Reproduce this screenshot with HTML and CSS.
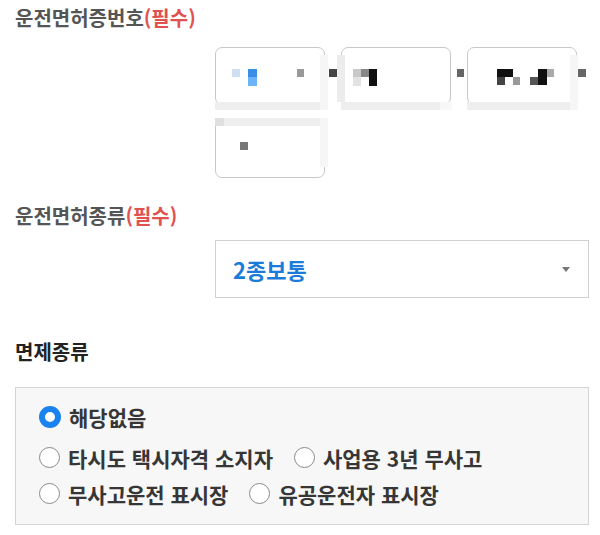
FILE: index.html
```html
<!DOCTYPE html>
<html lang="ko">
<head>
    <meta charset="UTF-8">
    <meta name="viewport" content="width=device-width, initial-scale=1.0">
    <title>운전면허 정보</title>
    <link rel="stylesheet" href="styles.css">
</head>
<body>

    <div class="form">
        <div class="label">운전면허증번호<span class="req">(필수)</span></div>

        <div class="license-no">
            <input type="text" class="box">
            <input type="text" class="box">
            <input type="text" class="box">
            <input type="text" class="box">

            <!-- 가려진 번호 (모자이크) -->
            <svg class="mosaic" width="375" height="131" viewBox="0 0 375 131">
                <rect x="0" y="55" width="105" height="8" fill="#eeeeee"/>
                <rect x="105" y="8" width="8" height="55" fill="#f6f6f6"/>
                <rect x="122" y="8" width="8" height="47" fill="#ececec"/>
                <rect x="126" y="55" width="99" height="8" fill="#eeeeee"/>
                <rect x="225" y="55" width="12" height="8" fill="#f8f8f8"/>
                <rect x="252" y="55" width="103" height="8" fill="#eeeeee"/>
                <rect x="355" y="8" width="8" height="55" fill="#f6f6f6"/>
                <rect x="0" y="71" width="9" height="8" fill="#e0e0e0"/>
                <rect x="9" y="71" width="96" height="8" fill="#eeeeee"/>
                <rect x="105" y="71" width="8" height="49" fill="#f6f6f6"/>

                <rect x="17" y="22" width="8" height="8" fill="#cfe0f2"/>
                <rect x="33" y="22" width="9" height="8" fill="#3b8ee6"/>
                <rect x="33" y="30" width="9" height="9" fill="#6db3f7"/>
                <rect x="82" y="22" width="7" height="8" fill="#999999"/>
                <rect x="114" y="22" width="8" height="8" fill="#444444"/>
                <rect x="138" y="22" width="8" height="8" fill="#c8c8c8"/>
                <rect x="138" y="30" width="8" height="9" fill="#e2e2e2"/>
                <rect x="146" y="22" width="8" height="8" fill="#888888"/>
                <rect x="154" y="22" width="8" height="17" fill="#111111"/>
                <rect x="242" y="22" width="7" height="8" fill="#666666"/>
                <rect x="282" y="22" width="16" height="8" fill="#111111"/>
                <rect x="282" y="30" width="8" height="8" fill="#444444"/>
                <rect x="298" y="30" width="7" height="8" fill="#999999"/>
                <rect x="315" y="30" width="8" height="8" fill="#555555"/>
                <rect x="323" y="22" width="9" height="16" fill="#111111"/>
                <rect x="332" y="22" width="7" height="8" fill="#aaaaaa"/>
                <rect x="363" y="22" width="8" height="8" fill="#666666"/>
                <rect x="25" y="95" width="8" height="8" fill="#777777"/>
            </svg>
        </div>

        <div class="label label-second">운전면허종류<span class="req">(필수)</span></div>

        <div class="select-wrap">
            <select class="select">
                <option>2종보통</option>
                <option>1종보통</option>
                <option>1종대형</option>
            </select>
        </div>

        <div class="label label-dark">면제종류</div>

        <div class="options">
            <div class="row">
                <label class="opt"><input type="radio" name="exempt" checked> 해당없음</label>
            </div>
            <div class="row">
                <label class="opt"><input type="radio" name="exempt"> 타시도 택시자격 소지자</label>
                <label class="opt"><input type="radio" name="exempt"> 사업용 3년 무사고</label>
            </div>
            <div class="row">
                <label class="opt"><input type="radio" name="exempt"> 무사고운전 표시장</label>
                <label class="opt"><input type="radio" name="exempt"> 유공운전자 표시장</label>
            </div>
        </div>
    </div>

</body>
</html>
```

FILE: styles.css
```css
body {
    margin: 0;
    background-color: #fff;
    font-family: "Noto Sans CJK KR", "Noto Sans", sans-serif;
}

.form {
    padding: 5px 11px 0 15px;
}

.label {
    font-size: 20px;
    line-height: 26px;
    font-weight: 700;
    color: #555;
}

.label .req {
    color: #e05252;
}

.label-second {
    margin-top: 25px;
}

.label-dark {
    margin-top: 41px;
    color: #222;
}

.license-no {
    position: relative;
    margin: 16px 0 0 200px;
    display: grid;
    grid-template-columns: repeat(3, 110px);
    gap: 15px 16px;
}

.box {
    box-sizing: border-box;
    height: 58px;
    border: 1px solid #c8c8c8;
    border-radius: 7px;
    background: #fff;
    outline: none;
}

.mosaic {
    position: absolute;
    left: 0;
    top: 0;
    overflow: visible;
}

.select-wrap {
    position: relative;
    margin: 11px 0 0 200px;
}

.select {
    box-sizing: border-box;
    width: 374px;
    height: 58px;
    padding: 0 0 0 17px;
    border: 1.5px solid #d0d0d0;
    border-radius: 0;
    background: #fff;
    -webkit-appearance: none;
    appearance: none;
    font-family: inherit;
    font-size: 22px;
    font-weight: 700;
    color: #1a7bd9;
    outline: none;
}

.select-wrap::after {
    content: "";
    position: absolute;
    left: 347px;
    top: 27px;
    border-left: 4.5px solid transparent;
    border-right: 4.5px solid transparent;
    border-top: 5px solid #777;
}

.options {
    margin-top: 22px;
    box-sizing: border-box;
    width: 574px;
    height: 138px;
    padding: 10.5px 0 0 23px;
    border: 1.5px solid #d4d4d4;
    background-color: #f7f7f7;
}

.row {
    display: flex;
    gap: 21px;
    height: 36px;
    align-items: center;
}

.row:first-child {
    margin-bottom: 5px;
}

.opt {
    display: flex;
    align-items: center;
    gap: 8px;
    font-size: 21px;
    font-weight: 700;
    color: #363636;
    white-space: nowrap;
}

.opt input {
    -webkit-appearance: none;
    appearance: none;
    box-sizing: border-box;
    width: 21px;
    height: 21px;
    margin: 0;
    border: 1.5px solid #8a8a8a;
    border-radius: 50%;
    background: #fff;
}

.opt input:checked {
    width: 22px;
    height: 22px;
    border: 6.5px solid #1a82ee;
}
```
